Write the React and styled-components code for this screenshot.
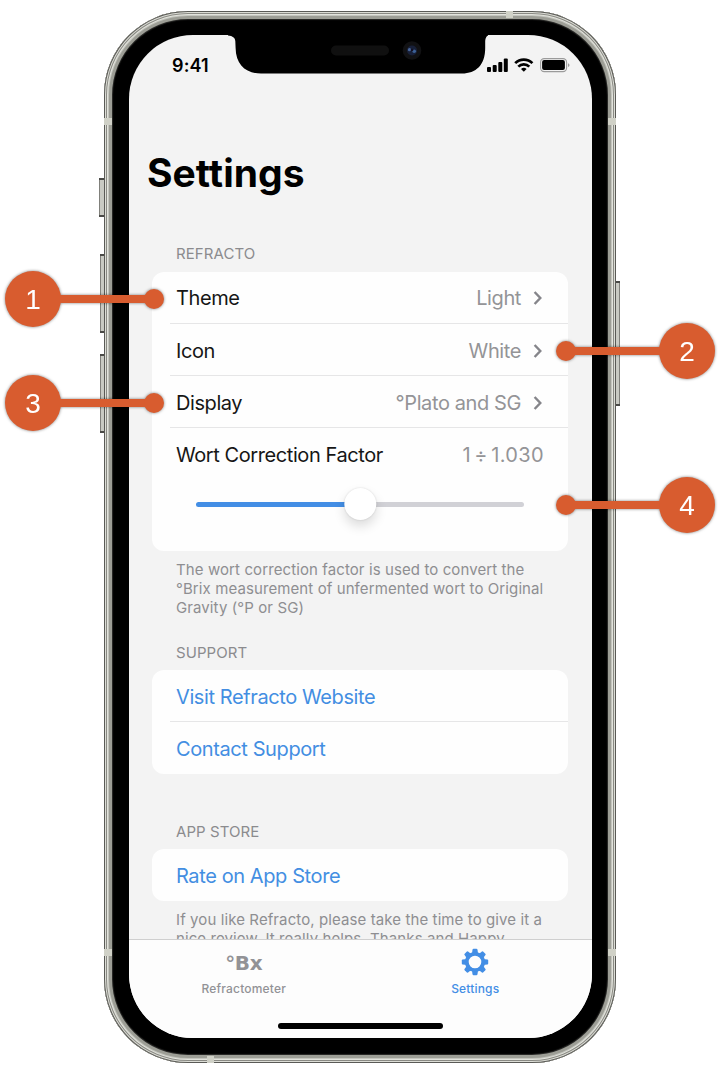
import React from 'react';
import styled, { createGlobalStyle, css } from 'styled-components';

const Global = createGlobalStyle`
  *, *::before, *::after { box-sizing: border-box; }
  body { margin: 0; background: #fff; font-family: Inter, "Liberation Sans", sans-serif; }
`;

const Stage = styled.main`
  position: relative;
  width: 720px;
  height: 1074px;
  padding: 11px 104px;
  overflow: hidden;
`;

const Phone = styled.div`
  position: relative;
  width: 512px;
  height: 1052px;
  padding: 24px 24px 25px 25px;
  border-radius: 84px;
  background: #000;
  box-shadow: inset 0 0 0 1px #5a5a56, inset 0 0 0 2px #dcddd6, inset 0 0 0 3px #8a8a84,
    inset 0 0 0 4px #e3e4dd, inset 0 0 0 5px #c4c5be, inset 0 0 0 8px #9d9e96, inset 0 0 1px 9px #2c2c2a;
`;

const SideButton = styled.i`
  position: absolute;
  ${(p) => (p.$right ? 'right: -4px;' : 'left: -4px;')}
  top: ${(p) => p.$top}px;
  width: ${(p) => p.$w || 4}px;
  ${(p) => p.$w && 'left: -5px;'}
  height: ${(p) => p.$h}px;
  background: linear-gradient(${(p) => (p.$right ? '270deg' : '90deg')}, #80807b 0 1px, #c9cac3 1px);
  border-block: 2px solid #4a4a47;
`;

const Antenna = styled.i`
  position: absolute;
  background: #d0d1c7;
  ${(p) => (p.$vertical ? 'width: 7px; height: 7px;' : 'width: 8px; height: 7px;')}
  ${(p) => p.$at}
`;

const Screen = styled.div`
  position: relative;
  display: flex;
  flex-direction: column;
  width: 463px;
  height: 1003px;
  overflow: hidden;
  border-radius: 64px;
  background: #f3f3f3;
`;

const Notch = styled.svg`
  position: absolute;
  left: 99px;
  top: 0;
`;

const StatusBar = styled.header`
  flex: none;
  height: 60px;
  padding: 0 21px 0 43px;
  display: flex;
  align-items: center;
  justify-content: space-between;
  font-size: 18px;
  font-weight: 600;
  letter-spacing: 0.15px;
`;

const Title = styled.h1`
  flex: none;
  margin: 54px 0 0 18px;
  height: 48px;
  font-size: 39px;
  line-height: 48px;
  font-weight: 700;
  letter-spacing: 0.05px;
`;

const Scroll = styled.div`
  flex: 1;
  min-height: 0;
  overflow: hidden;
  padding: 47px 24px 0 23px;
`;

const Section = styled.section`
  margin-bottom: ${(p) => p.$gap || 0}px;
`;

const SectionTitle = styled.h2`
  margin: 0;
  padding-left: 24px;
  height: ${(p) => p.$height || 28}px;
  line-height: 20px;
  font-size: 15px;
  font-weight: 400;
  letter-spacing: 0.08px;
  color: #8b8b8e;
`;

const Card = styled.div`
  border-radius: 12px;
  background: #fefefe;
`;

const Row = styled.div`
  display: flex;
  align-items: center;
  height: 52px;
  margin-left: 18px;
  padding: ${(p) => p.$drop || 1}px 24px 0 6px;
  font-size: 20px;
  letter-spacing: ${(p) => (p.$link ? '-0.4px' : '-0.42px')};
  color: ${(p) => (p.$link ? '#438ee2' : '#161616')};
  border-bottom: ${(p) => (p.$last ? 'none' : '1px solid #e6e6e7')};
`;

const Value = styled.span`
  margin-left: auto;
  color: #949497;
  letter-spacing: ${(p) => p.$spacing || '-0.4px'};
  word-spacing: ${(p) => p.$words || 'normal'};
`;

const Chevron = styled.svg`
  margin-left: 12px;
  margin-right: 1px;
`;

const SliderBox = styled.div`
  height: 71px;
  padding: 0 44px;
  display: flex;
  align-items: flex-start;
`;

const Track = styled.div`
  position: relative;
  flex: 1;
  height: 5px;
  margin-top: 22px;
  border-radius: 3px;
  background: linear-gradient(90deg, #438ee5 50%, #d1d1d6 50%);
`;

const Thumb = styled.i`
  position: absolute;
  left: 50%;
  top: 50%;
  width: 32px;
  height: 32px;
  border-radius: 50%;
  background: #fff;
  transform: translate(-49%, -53%);
  box-shadow: 0 0 2px rgba(0, 0, 0, 0.14), 0 6px 12px rgba(0, 0, 0, 0.14);
`;

const Note = styled.p`
  margin: 9px 0 0;
  padding-left: 24px;
  font-size: 15px;
  line-height: 19px;
  letter-spacing: 0.1px;
  white-space: pre;
  color: #8e8e91;
`;

const TabBar = styled.nav`
  flex: none;
  height: 99px;
  display: grid;
  grid-template-columns: 1fr 1fr;
  grid-template-rows: 83px 16px;
  background: #fdfdfd;
  border-top: 1px solid #cfcfcf;
`;

const Tab = styled.div`
  display: flex;
  flex-direction: column;
  align-items: center;
  padding: 8px 2px 0 0;
  font-size: 12px;
  font-weight: 500;
  letter-spacing: 0.18px;
  color: ${(p) => (p.$active ? '#438ee5' : '#929296')};
`;

const TabIcon = styled.span`
  display: flex;
  align-items: center;
  justify-content: center;
  height: 28px;
  margin-bottom: 5px;
  padding-top: ${(p) => p.$drop || 0}px;
  font-family: "DejaVu Sans", sans-serif;
  font-weight: 700;
  font-size: 20px;
  letter-spacing: -0.4px;
`;

const HomeBar = styled.i`
  grid-column: 1 / 3;
  justify-self: center;
  width: 165px;
  height: 6px;
  border-radius: 3px;
  background: #000;
`;

const Callout = styled.div`
  position: absolute;
  top: ${(p) => p.$y - 28}px;
  ${(p) => (p.$right ? css`right: 5px; flex-direction: row-reverse;` : css`left: 5px;`)}
  display: flex;
  align-items: center;
  width: 159px;
  height: 56px;
  filter: drop-shadow(0 0 1.5px rgba(0, 0, 0, 0.5));
`;

const Bubble = styled.b`
  flex: none;
  width: 56px;
  height: 56px;
  border-radius: 50%;
  background: #d85c2f;
  color: #fff;
  font: 400 28px/57px "Liberation Sans", sans-serif;
  text-align: center;
`;

const Arm = styled.i`
  flex: 1;
  height: 8px;
  margin: 0 -2px;
  background: #d85c2f;
`;

const Dot = styled.i`
  width: 20px;
  height: 20px;
  border-radius: 50%;
  background: #d85c2f;
`;

const Status = () => (
  <svg width="84" height="18" viewBox="487 56 84 18" aria-hidden="true">
    <rect x="487" y="67" width="4" height="5" rx="1" />
    <rect x="492.7" y="65" width="4" height="7" rx="1" />
    <rect x="498.3" y="62" width="4" height="10" rx="1" />
    <rect x="503.8" y="58.5" width="4" height="13.5" rx="1" />
    <g fill="none" stroke="#000" strokeWidth="2.7">
      <path d="M515.2 63.1a12.2 12.2 0 0 1 17.2 0" />
      <path d="M518.3 66.6a7.8 7.8 0 0 1 11 0" />
    </g>
    <path d="M521 68.9a4.2 4.2 0 0 1 5.6 0L523.8 71.8z" />
    <rect x="540.6" y="58.6" width="26" height="13" rx="3.6" fill="none" stroke="#9b9b9b" strokeWidth="1.1" />
    <rect x="542.1" y="60.1" width="22.8" height="10" rx="2" />
    <path d="M568 63.2c2 .6 2 3.2 0 3.8z" fill="#999" />
  </svg>
);

const Arrow = () => (
  <Chevron width="10" height="16" viewBox="0 0 10 16" fill="none" stroke="#85858a" strokeWidth="2.4">
    <path d="M1.6 2l5.7 6-5.7 6" />
  </Chevron>
);

const Gear = () => (
  <svg width="28" height="28" viewBox="-14 -14 28 28" fill="currentColor">
    {[0, 45, 90, 135, 180, 225, 270, 315].map((a) => (
      <path key={a} transform={`rotate(${a})`} d="M-3.1-8L-2.5-12.3Q-2.3-13.2-1.4-13.2H1.4Q2.3-13.2 2.5-12.3L3.1-8z" />
    ))}
    <circle r="8.2" fill="none" stroke="currentColor" strokeWidth="3.8" />
  </svg>
);

const callouts = [
  { n: 1, y: 299 },
  { n: 2, y: 351, right: true },
  { n: 3, y: 403 },
  { n: 4, y: 505, right: true },
];

export default function App() {
  return (
    <Stage>
      <Global />
      <Phone>
        <SideButton $top={167} $h={39} $w={5} />
        <SideButton $top={243} $h={79} />
        <SideButton $top={343} $h={79} />
        <SideButton $right $top={270} $h={125} />
        <Antenna $at="left: 0; top: 107px;" />
        <Antenna $at="right: 0; top: 107px;" />
        <Antenna $at="left: 0; bottom: 107px;" />
        <Antenna $at="right: 0; bottom: 107px;" />
        <Antenna $vertical $at="left: 402px; top: 0;" />
        <Antenna $vertical $at="left: 103px; bottom: 0;" />
        <Screen>
          <StatusBar>
            <span>9:41</span>
            <Status />
          </StatusBar>
          <Title>Settings</Title>
          <Scroll>
            <Section $gap={26}>
              <SectionTitle>REFRACTO</SectionTitle>
              <Card>
                <Row>Theme<Value>Light</Value><Arrow /></Row>
                <Row $drop={2}>Icon<Value>White</Value><Arrow /></Row>
                <Row $drop={3}>Display<Value>°Plato and SG</Value><Arrow /></Row>
                <Row $last>Wort Correction Factor<Value $spacing="0.35px" $words="-2.6px">1 ÷ 1.030</Value></Row>
                <SliderBox><Track><Thumb /></Track></SliderBox>
              </Card>
              <Note>{'The wort correction factor is used to convert the\n°Brix measurement of unfermented wort to Original\nGravity (°P or SG)'}</Note>
            </Section>
            <Section $gap={48}>
              <SectionTitle $height={27}>SUPPORT</SectionTitle>
              <Card>
                <Row $link $drop={2}>Visit Refracto Website</Row>
                <Row $link $last>Contact Support</Row>
              </Card>
            </Section>
            <Section>
              <SectionTitle $height={27}>APP STORE</SectionTitle>
              <Card><Row $link $last>Rate on App Store</Row></Card>
              <Note>{'If you like Refracto, please take the time to give it a\nnice review. It really helps. Thanks and Happy'}</Note>
            </Section>
          </Scroll>
          <TabBar>
            <Tab><TabIcon $drop={2}>°Bx</TabIcon>Refractometer</Tab>
            <Tab $active><TabIcon><Gear /></TabIcon>Settings</Tab>
            <HomeBar />
          </TabBar>
          <Notch width="260" height="40" viewBox="228 35 260 40">
            <path d="M228 34H488V35.5Q485.5 36.5 485.2 41V48C485.2 65 476 73.5 462 73.5H261C246 73.5 235.8 65 235.6 48L235.3 41Q235 36 228 35.5z" />
            <rect x="331" y="45.5" width="58" height="10" rx="5" fill="#101010" />
            <circle cx="412" cy="50.5" r="9.3" fill="#111113" />
            <circle cx="412" cy="50.5" r="5" fill="#182039" />
            <circle cx="409.5" cy="49.7" r="1.6" fill="#49679b" />
            <circle cx="414.2" cy="51.3" r="1.8" fill="#3c6197" />
            <circle cx="412" cy="50" r="1.3" fill="#141021" />
          </Notch>
        </Screen>
      </Phone>
      {callouts.map((c) => (
        <Callout key={c.n} $y={c.y} $right={c.right}>
          <Bubble>{c.n}</Bubble>
          <Arm />
          <Dot />
        </Callout>
      ))}
    </Stage>
  );
}
